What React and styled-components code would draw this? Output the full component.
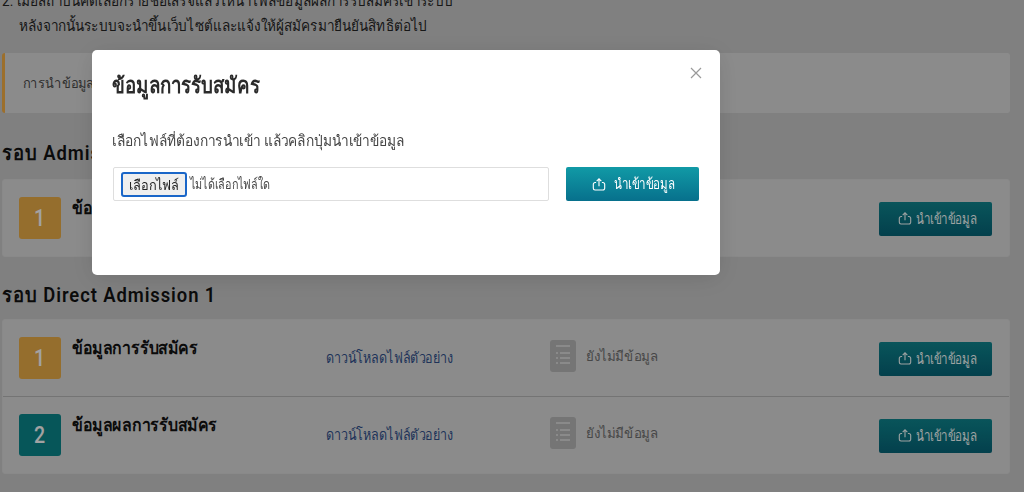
import React from "react";
import styled, { createGlobalStyle, css } from "styled-components";

const narrow = (ratio, origin = "left center") => css`
  display: inline-block;
  white-space: nowrap;
  transform: scaleX(${ratio});
  transform-origin: ${origin};
`;

const Global = createGlobalStyle`
  html, body { margin: 0; height: 100%; overflow: hidden; background: #b8b8b8; }
  body { font-family: Roboto, "Noto Sans", "Liberation Sans", sans-serif; color: #222; }
  * { box-sizing: border-box; }
`;

const Page = styled.div`
  margin-top: -11px;
  padding: 0 14px 0 2px;
`;

const Intro = styled.ol`
  margin: 0;
  padding: 0 0 0 17px;
  list-style: none;
  font-size: 15px;
  line-height: 25px;
  height: 46px;
  color: #222;
`;

const IntroLine = styled.li`
  ${narrow(0.905)}
  display: block;
  margin-left: ${(p) => (p.$hanging ? -17 : 0)}px;
`;

const Notice = styled.div`
  height: 60px;
  padding: 0 0 0 18px;
  display: flex;
  align-items: center;
  background: #c8c8c8;
  border-radius: 3px;
  border-left: 3px solid #e0a040;
  font-size: 14px;
  color: #444;
`;

const NoticeText = styled.span`
  ${narrow(0.92)}
`;

const SectionTitle = styled.h2`
  ${narrow(0.92)}
  display: block;
  margin: 0;
  height: 24px;
  font-size: 20px;
  line-height: 24px;
  font-weight: 600;
  letter-spacing: 1px;
  color: #111;
`;

const Gap = styled.div`
  height: ${(p) => p.$h}px;
`;

const Card = styled.section`
  background: #c8c8c8;
  border: 1px solid #c4c4c4;
  border-radius: 3px;
  margin-top: ${(p) => p.$top}px;
`;

const Row = styled.div`
  display: grid;
  grid-template-columns: 42px 254px 235px 1fr 113px;
  align-items: center;
  padding: 17px 17px 17px 16px;
  & + & { border-top: 1px solid #a6a6a6; }
`;

const Badge = styled.div`
  width: 42px;
  height: 42px;
  border-radius: 3px;
  display: flex;
  align-items: center;
  justify-content: center;
  color: #e8e8e8;
  font-size: 23px;
  font-weight: 500;
  background: ${(p) => (p.$tone === "teal" ? "#0a7b80" : "#d69e41")};
`;

const Digit = styled.span`
  ${narrow(0.85, "center")}
`;

const RowTitle = styled.div`
  align-self: start;
  margin: -1px 0 0 11px;
  font-size: 18px;
  line-height: 24px;
  font-weight: 600;
  color: #111;
`;

const RowTitleText = styled.span`
  ${narrow(0.88)}
`;

const SampleLink = styled.a`
  ${narrow(0.835)}
  margin-left: 11px;
  font-size: 15px;
  color: #2d4a80;
`;

const Status = styled.div`
  display: flex;
  align-items: center;
  gap: 10px;
  font-size: 14px;
  color: #666;
  margin-top: -4px;
`;

const StatusText = styled.span`
  ${narrow(0.95)}
`;

const UploadButton = styled.button`
  display: flex;
  align-items: center;
  width: ${(p) => (p.$large ? "133px" : "113px")};
  height: 34px;
  padding: 0 0 0 ${(p) => (p.$large ? 26 : 19)}px;
  border: none;
  border-radius: 2px;
  font-family: inherit;
  font-size: 15px;
  font-weight: 500;
  color: #fff;
  background: linear-gradient(#119aa6, #07708c);
`;

const ButtonDim = styled(UploadButton)`
  margin-top: 1px;
  color: #e0e8e8;
  background: linear-gradient(#0d7a82, #065c6e);
`;

const ButtonText = styled.span`
  ${narrow(0.77)}
  margin-left: ${(p) => (p.$large ? 8 : 4)}px;
`;

const Overlay = styled.div`
  position: fixed;
  inset: 0;
  padding: 50px 0 0 92px;
  background: rgba(0, 0, 0, 0.3);
`;

const Modal = styled.div`
  position: relative;
  width: 628px;
  height: 225px;
  padding: 21px 21px 0;
  background: #fff;
  border-radius: 5px;
  box-shadow: 0 4px 24px rgba(0, 0, 0, 0.12);
`;

const Close = styled.button`
  position: absolute;
  top: 16px;
  right: 17px;
  width: 14px;
  height: 14px;
  padding: 0;
  border: none;
  background: none;
  color: #9a9a9a;
  display: flex;
`;

const ModalTitle = styled.h3`
  ${narrow(0.85)}
  display: block;
  margin: 0 0 0 -1px;
  font-size: 22px;
  line-height: 30px;
  font-weight: 600;
  color: #2b2b2b;
`;

const Hint = styled.p`
  ${narrow(0.915)}
  display: block;
  margin: 29px 0 0 -1px;
  font-size: 15px;
  line-height: 22px;
  color: #444;
`;

const UploadRow = styled.div`
  display: flex;
  gap: 17px;
  margin-top: 15px;
`;

const FileField = styled.div`
  flex: 1;
  height: 34px;
  display: flex;
  align-items: center;
  gap: 3px;
  padding: 0 7px;
  border: 1px solid #dedede;
  border-radius: 2px;
  font-size: 14px;
  color: #444;
`;

const FilePick = styled.button`
  width: 66px;
  height: 25px;
  padding: 0;
  border: 2px solid #1a66c8;
  border-radius: 3px;
  background: #efefef;
  font-family: inherit;
  font-size: 14px;
  color: #222;
`;

const FilePickText = styled.span`
  ${narrow(0.91, "center")}
`;

const FileName = styled.span`
  ${narrow(0.77)}
`;

const UploadSvg = styled.svg`
  flex: none;
`;

const UploadIcon = () => (
  <UploadSvg width="14" height="15" viewBox="0 0 15 15" fill="none" stroke="currentColor" strokeWidth="1.2">
    <path d="M4.4 5.4H3.2a1.8 1.8 0 0 0-1.8 1.8v4.4a1.8 1.8 0 0 0 1.8 1.8h8.6a1.8 1.8 0 0 0 1.8-1.8V7.2a1.8 1.8 0 0 0-1.8-1.8h-1.2" />
    <path d="M7.5 9.4V1.4M5 3.8l2.5-2.4L10 3.8" />
  </UploadSvg>
);

const ListIcon = () => (
  <svg width="26" height="32" viewBox="0 0 26 32">
    <rect width="26" height="32" rx="3" fill="#a8a8a8" />
    <g fill="#c6c6c6">
      <rect x="6" y="5" width="14" height="2" />
      <rect x="6" y="12" width="2" height="2" />
      <rect x="10" y="12" width="10" height="2" />
      <rect x="6" y="17" width="2" height="2" />
      <rect x="10" y="17" width="10" height="2" />
      <rect x="6" y="22" width="2" height="2" />
      <rect x="10" y="22" width="10" height="2" />
    </g>
  </svg>
);

const CloseIcon = () => (
  <svg width="14" height="14" viewBox="0 0 14 14" stroke="currentColor" strokeWidth="1.2">
    <path d="M2 2l10 10M12 2L2 12" />
  </svg>
);

const DataRow = ({ n, tone, title }) => (
  <Row>
    <Badge $tone={tone}>
      <Digit>{n}</Digit>
    </Badge>
    <RowTitle>
      <RowTitleText>{title}</RowTitleText>
    </RowTitle>
    <SampleLink>ดาวน์โหลดไฟล์ตัวอย่าง</SampleLink>
    <Status>
      <ListIcon />
      <StatusText>ยังไม่มีข้อมูล</StatusText>
    </Status>
    <ButtonDim>
      <UploadIcon />
      <ButtonText>นำเข้าข้อมูล</ButtonText>
    </ButtonDim>
  </Row>
);

export default function App() {
  return (
    <>
      <Global />
      <Page>
        <Intro>
          <IntroLine $hanging>2. เมื่อสถาบันคัดเลือกรายชื่อเสร็จแล้วให้นำไฟล์ข้อมูลผลการรับสมัครเข้าระบบ</IntroLine>
          <IntroLine>หลังจากนั้นระบบจะนำขึ้นเว็บไซต์และแจ้งให้ผู้สมัครมายืนยันสิทธิต่อไป</IntroLine>
        </Intro>
        <Gap $h={18} />
        <Notice>
          <NoticeText>การนำข้อมูลเข้าระบบ</NoticeText>
        </Notice>
        <Gap $h={28} />
        <SectionTitle>รอบ Admission</SectionTitle>
        <Card $top={14}>
          <DataRow n="1" tone="orange" title="ข้อมูลการรับสมัคร" />
        </Card>
        <Gap $h={26} />
        <SectionTitle>รอบ Direct Admission 1</SectionTitle>
        <Card $top={12}>
          <DataRow n="1" tone="orange" title="ข้อมูลการรับสมัคร" />
          <DataRow n="2" tone="teal" title="ข้อมูลผลการรับสมัคร" />
        </Card>
      </Page>
      <Overlay>
        <Modal>
          <Close aria-label="ปิด">
            <CloseIcon />
          </Close>
          <ModalTitle>ข้อมูลการรับสมัคร</ModalTitle>
          <Hint>เลือกไฟล์ที่ต้องการนำเข้า แล้วคลิกปุ่มนำเข้าข้อมูล</Hint>
          <UploadRow>
            <FileField>
              <FilePick>
                <FilePickText>เลือกไฟล์</FilePickText>
              </FilePick>
              <FileName>ไม่ได้เลือกไฟล์ใด</FileName>
            </FileField>
            <UploadButton $large>
              <UploadIcon />
              <ButtonText $large>นำเข้าข้อมูล</ButtonText>
            </UploadButton>
          </UploadRow>
        </Modal>
      </Overlay>
    </>
  );
}
